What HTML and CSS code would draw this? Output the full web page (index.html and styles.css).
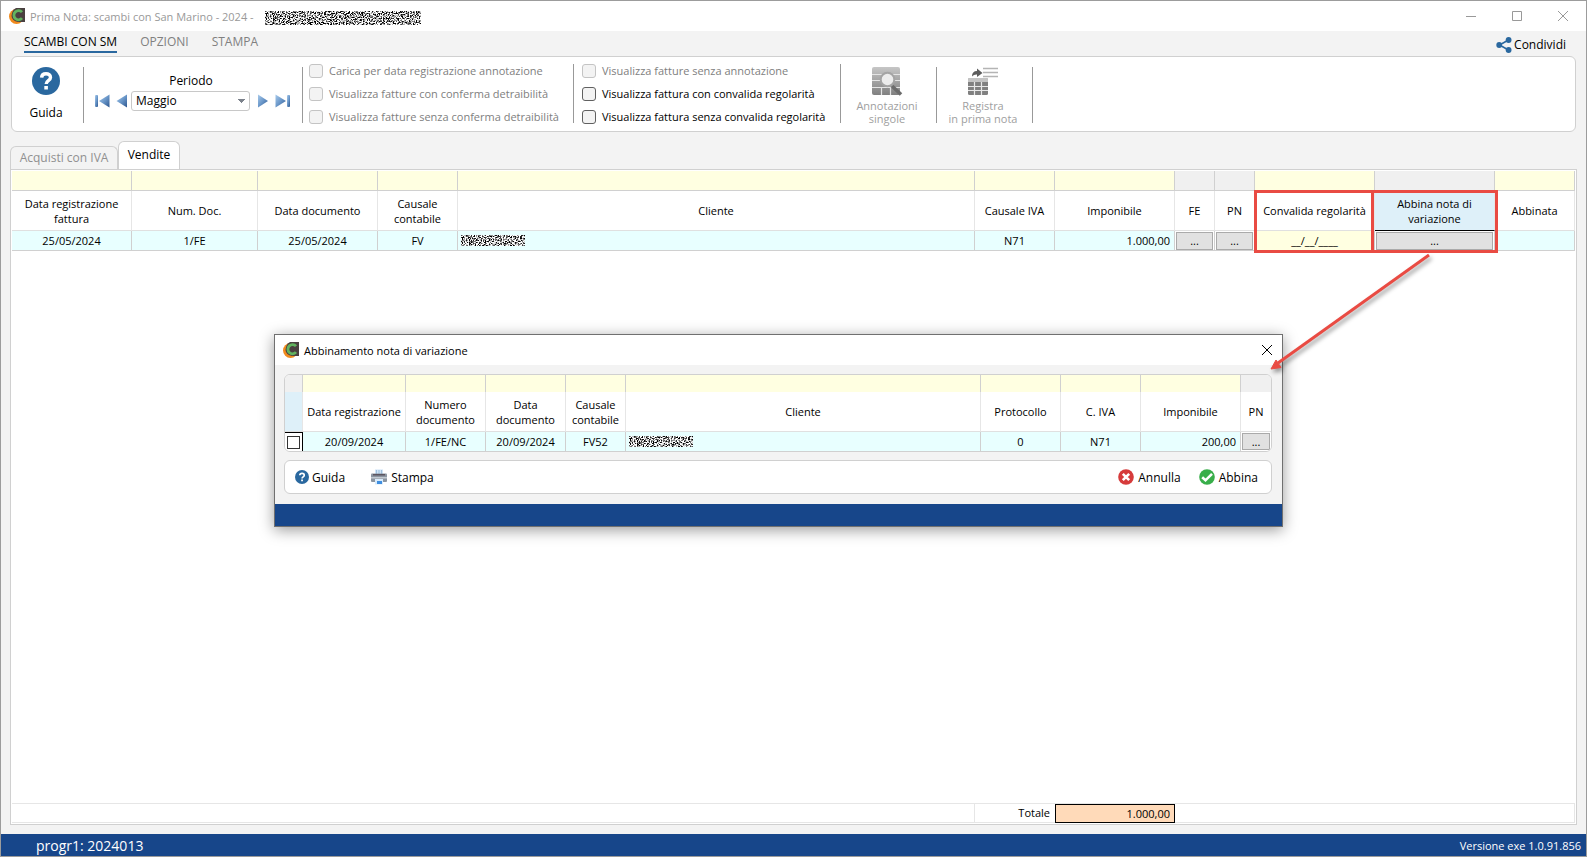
FILE: index.html
```html
<!DOCTYPE html>
<html lang="it">
<head>
<meta charset="utf-8">
<title>Prima Nota: scambi con San Marino - 2024</title>
<link rel="stylesheet" href="styles.css">
</head>
<body>
<svg class="defs" width="0" height="0" aria-hidden="true">
  <defs>
    <filter id="noise" x="0" y="0" width="100%" height="100%" color-interpolation-filters="sRGB">
      <feTurbulence type="fractalNoise" baseFrequency="0.7 0.8" numOctaves="3" seed="7"/>
      <feColorMatrix values="3.500 3.500 0 0 -2.850  3.500 3.500 0 0 -2.850  3.500 3.500 0 0 -2.850  0 0 0 0 1"/>
    </filter>
    <linearGradient id="nav" x1="0" y1="0" x2="1" y2="1">
      <stop offset="0" stop-color="#a9cbec"/><stop offset="0.5" stop-color="#6a97c9"/><stop offset="1" stop-color="#2d568f"/>
    </linearGradient>
    <linearGradient id="grey" x1="0" y1="0" x2="0" y2="1">
      <stop offset="0" stop-color="#c6c6c6"/><stop offset="1" stop-color="#808080"/>
    </linearGradient>
    <symbol id="logo" viewBox="0 0 16 16">
      <circle cx="7.500" cy="8.500" r="7.500" fill="#f08a1d"/>
      <path d="M7 0H16V14H9Q3 13 2.500 8Q3 2 7 0Z" fill="#4a4040"/>
      <path d="M13 4.200A4.600 4.600 0 1 0 13 10.200" fill="none" stroke="#62b45f" stroke-width="2.800"/>
    </symbol>
    <symbol id="help" viewBox="0 0 28 28">
      <circle cx="14" cy="14" r="14" fill="#2a689f"/>
      <path d="M9.600 10.600C9.800 7.600 11.800 6.700 14 6.700c2.500 0 4.500 1.300 4.500 3.700 0 3.300-4.300 3.200-4.300 6.500" fill="none" stroke="#fff" stroke-width="3.400"/>
      <rect x="12.300" y="19" width="3.600" height="3.500" fill="#fff"/>
    </symbol>
  </defs>
</svg>
<div class="window">
  <header class="titlebar">
    <svg class="logo"><use href="#logo"/></svg>
    <span class="title">Prima Nota: scambi con San Marino - 2024 -</span>
    <svg class="redacted redacted-title" aria-hidden="true"><rect width="100%" height="100%" filter="url(#noise)"/></svg>
    <div class="controls">
      <button type="button" aria-label="Riduci"><svg viewBox="0 0 12 12"><path d="M1 6.500H11"/></svg></button>
      <button type="button" aria-label="Ingrandisci"><svg viewBox="0 0 12 12"><path d="M1.500 1.500H10.500V10.500H1.500Z"/></svg></button>
      <button type="button" aria-label="Chiudi"><svg viewBox="0 0 12 12"><path d="M1 1L11 11M11 1L1 11"/></svg></button>
    </div>
  </header>

  <nav class="menu">
    <button type="button" class="active">SCAMBI CON SM</button>
    <button type="button">OPZIONI</button>
    <button type="button">STAMPA</button>
    <button type="button" class="share">
      <svg viewBox="0 0 16 16"><path d="M12.500 3L3.500 8L12.500 13" fill="none" stroke="#2a689f" stroke-width="1.600"/><circle cx="3.200" cy="8" r="2.900" fill="#2a689f"/><circle cx="12.600" cy="3" r="2.900" fill="#2a689f"/><circle cx="12.600" cy="13" r="2.900" fill="#2a689f"/></svg>
      Condividi
    </button>
  </nav>

  <section class="ribbon">
    <div class="group group-help">
      <button type="button" class="tool tool-help"><svg><use href="#help"/></svg>Guida</button>
    </div>
    <div class="group group-period">
      <label for="periodo">Periodo</label>
      <div class="period">
        <button type="button" class="nav" aria-label="Primo"><svg width="16" height="14" viewBox="0 0 16 14"><rect x="1" y="1" width="3" height="12" rx="1" fill="url(#nav)"/><path d="M15.500 0.500V13.500L5 7Z" fill="url(#nav)"/></svg></button>
        <button type="button" class="nav" aria-label="Precedente"><svg width="12" height="14" viewBox="0 0 12 14"><path d="M11 0.500V13.500L0.500 7Z" fill="url(#nav)"/></svg></button>
        <select id="periodo"><option>Maggio</option></select>
        <button type="button" class="nav" aria-label="Successivo"><svg width="12" height="14" viewBox="0 0 12 14"><path d="M1 0.500V13.500L11 7Z" fill="url(#nav)"/></svg></button>
        <button type="button" class="nav" aria-label="Ultimo"><svg width="16" height="14" viewBox="0 0 16 14"><rect x="12" y="1" width="3" height="12" rx="1" fill="url(#nav)"/><path d="M0.500 0.500V13.500L11 7Z" fill="url(#nav)"/></svg></button>
      </div>
    </div>
    <div class="group group-checks checks-a">
      <label class="check off"><input type="checkbox" disabled>Carica per data registrazione annotazione</label>
      <label class="check off"><input type="checkbox" disabled>Visualizza fatture con conferma detraibilità</label>
      <label class="check off"><input type="checkbox" disabled>Visualizza fatture senza conferma detraibilità</label>
    </div>
    <div class="group group-checks checks-b">
      <label class="check off"><input type="checkbox" disabled>Visualizza fatture senza annotazione</label>
      <label class="check"><input type="checkbox">Visualizza fattura con convalida regolarità</label>
      <label class="check"><input type="checkbox">Visualizza fattura senza convalida regolarità</label>
    </div>
    <div class="group group-tool">
      <button type="button" class="tool" disabled>
        <svg viewBox="0 0 32 29"><rect x="1" y="0" width="28" height="28" rx="2" fill="url(#grey)"/><path d="M1 7.500H29M1 13.500H29M1 20.500H29M10.500 20V28M19.500 20V28" stroke="#e4e4e4" stroke-width="1.200"/><path d="M21 19L30 27.500" stroke="#6c6c6c" stroke-width="3.600"/><circle cx="16.500" cy="12.500" r="6.800" fill="#ececec" stroke="#a4a4a4" stroke-width="2"/></svg>
        Annotazioni<br>singole
      </button>
    </div>
    <div class="group group-tool">
      <button type="button" class="tool" disabled>
        <svg viewBox="0 0 32 29"><rect x="1" y="11" width="20" height="17" rx="1.500" fill="#808080"/><path d="M1 15V12.500Q1 11 2.500 11H19.500Q21 11 21 12.500V15Z" fill="#c4c4c4"/><path d="M1 19.500H21M1 23.500H21M7.500 15V28M14.500 15V28" stroke="#e8e8e8" stroke-width="1.200"/><path d="M5 9.500Q5 4 10 4V1.500L15.500 6L10 10V7.500Q7 7.200 5 9.500Z" fill="#5c5c5c"/><path d="M16 1.500H31M16 5.500H31M16 9.500H31" stroke="#b4b4b4" stroke-width="1.400"/></svg>
        Registra<br>in prima nota
      </button>
    </div>
  </section>

  <div class="tabs">
    <button type="button" class="tab">Acquisti con IVA</button>
    <button type="button" class="tab current">Vendite</button>
  </div>

  <main class="panel">
    <table class="grid">
      <colgroup><col class="w120"><col class="w126"><col class="w120"><col class="w80"><col><col class="w80"><col class="w120"><col class="w40"><col class="w40"><col class="w120"><col class="w120"><col class="w80"></colgroup>
      <thead>
        <tr class="filter"><td></td><td></td><td></td><td></td><td></td><td></td><td></td><td class="locked"></td><td class="locked"></td><td></td><td class="locked"></td><td></td></tr>
        <tr class="heads"><th>Data registrazione<br>fattura</th><th>Num. Doc.</th><th>Data documento</th><th>Causale<br>contabile</th><th>Cliente</th><th>Causale IVA</th><th>Imponibile</th><th>FE</th><th>PN</th><th>Convalida regolarità</th><th class="selected underlined">Abbina nota di<br>variazione</th><th>Abbinata</th></tr>
      </thead>
      <tbody>
        <tr class="row"><td>25/05/2024</td><td>1/FE</td><td>25/05/2024</td><td>FV</td><td class="left"><svg class="redacted redacted-name" aria-hidden="true"><rect width="100%" height="100%" filter="url(#noise)"/></svg></td><td>N71</td><td class="num">1.000,00</td><td class="cmd"><button type="button">...</button></td><td class="cmd"><button type="button">...</button></td><td class="edit">__/__/____</td><td class="cmd"><button type="button">...</button></td><td></td></tr>
      </tbody>
    </table>
    <div class="totals">
      <label for="totale">Totale</label>
      <input id="totale" type="text" value="1.000,00" readonly>
    </div>
  </main>

  <footer class="status"><span class="progr">progr1: 2024013</span><span>Versione exe 1.0.91.856</span></footer>

  <section class="dialog" role="dialog" aria-labelledby="dlg-title">
    <header class="dialog-title">
      <svg class="logo"><use href="#logo"/></svg>
      <span id="dlg-title">Abbinamento nota di variazione</span>
      <button type="button" aria-label="Chiudi"><svg viewBox="0 0 12 12"><path d="M1 1L11 11M11 1L1 11"/></svg></button>
    </header>
    <div class="dialog-body">
      <div class="dialog-grid">
        <table class="grid">
          <colgroup><col class="w18"><col class="w103"><col class="w80"><col class="w80"><col class="w60"><col><col class="w80"><col class="w80"><col class="w100"><col class="w30"></colgroup>
          <thead>
            <tr class="filter"><td class="locked"></td><td></td><td></td><td></td><td></td><td></td><td></td><td></td><td></td><td class="locked"></td></tr>
            <tr class="heads"><th class="selected" aria-label="Selezione"></th><th>Data registrazione</th><th>Numero<br>documento</th><th>Data<br>documento</th><th>Causale<br>contabile</th><th>Cliente</th><th>Protocollo</th><th>C. IVA</th><th>Imponibile</th><th>PN</th></tr>
          </thead>
          <tbody>
            <tr class="row"><td class="pick"><input type="checkbox" aria-label="Seleziona riga"></td><td>20/09/2024</td><td>1/FE/NC</td><td>20/09/2024</td><td>FV52</td><td class="left"><svg class="redacted redacted-name" aria-hidden="true"><rect width="100%" height="100%" filter="url(#noise)"/></svg></td><td>0</td><td>N71</td><td class="num">200,00</td><td class="cmd"><button type="button">...</button></td></tr>
          </tbody>
        </table>
      </div>
      <div class="dialog-tools">
        <button type="button" class="cmd-help"><svg viewBox="0 0 28 28"><use href="#help"/></svg>Guida</button>
        <button type="button"><svg viewBox="0 0 16 16"><path d="M4 0.500H12V6H4Z" fill="#cfe4f7"/><path d="M5.500 1V5M8 1V5M10.500 1V5" stroke="#9fbfdc"/><rect x="0" y="4.500" width="16" height="8.500" rx="1" fill="#8b95a1"/><rect x="2" y="5" width="12" height="1.500" fill="#5c5560"/><rect x="0" y="8" width="16" height="1.500" fill="#c3cad2"/><path d="M4 10H12V15.500H4Z" fill="#d8ebfb"/><rect x="6" y="12" width="5" height="3" fill="#3f8ee0"/></svg>Stampa</button>
        <button type="button" class="push"><svg viewBox="0 0 16 16"><circle cx="8" cy="8" r="7.800" fill="#d63b3b"/><path d="M4.800 4.800L11.200 11.200M11.200 4.800L4.800 11.200" stroke="#fff" stroke-width="2.600"/></svg>Annulla</button>
        <button type="button"><svg viewBox="0 0 16 16"><circle cx="8" cy="8" r="7.800" fill="#38ae4a"/><path d="M3.200 8.300L6.500 11.300L13 4.800" fill="none" stroke="#fff" stroke-width="2.600"/></svg>Abbina</button>
      </div>
    </div>
    <div class="dialog-foot"></div>
  </section>

  <div class="mark mark-date"></div>
  <div class="mark mark-match"></div>
  <svg class="arrow" viewBox="0 0 170 126" aria-hidden="true"><path d="M163 3L12 111" stroke="#e94b43" stroke-width="3"/><path d="M5 117L10 108L15 115.500Z" fill="#e94b43" stroke="#e94b43" stroke-linejoin="round"/></svg>
</div>
</body>
</html>
```

FILE: styles.css
```css
* { box-sizing: border-box; }
body {
  margin: 0;
  font: 11px/15px "Open Sans", "Noto Sans", sans-serif;
  color: #000;
  background: #f3f3f3;
}
button, input, select { font: inherit; color: inherit; margin: 0; }
button { padding: 0; border: 0; background: none; }
.defs { position: absolute; }

.window {
  position: relative;
  display: flex;
  flex-direction: column;
  min-height: 100vh;
  border: 1px solid #9c9c9c;
}

.logo { width: 16px; height: 16px; flex: none; }
.redacted { display: block; flex: none; }
.redacted-title { width: 156px; height: 14px; margin: 4px 0 0 11px; }
.redacted-name { width: 64px; height: 11px; }

.titlebar { display: flex; align-items: center; height: 30px; padding-left: 8px; background: #fff; }
.title { margin-left: 5px; color: #999; }
.controls { display: flex; margin-left: auto; }
.controls button { width: 46px; height: 30px; display: grid; place-items: center; }
.controls svg, .dialog-title button svg { width: 12px; height: 12px; fill: none; stroke: #999; }

.menu { display: flex; align-items: flex-start; height: 25px; padding: 2px 20px 0 23px; gap: 23px; font-size: 12px; color: #808080; }
.menu button { height: 20px; line-height: 16px; padding-bottom: 2px; }
.menu .active { color: #000; border-bottom: 2px solid #2a689f; padding-bottom: 1px; }
.menu .share { display: flex; align-items: center; gap: 2px; margin: 2px 0 0 auto; padding: 0; color: #000; }
.share svg { width: 16px; height: 16px; }

.ribbon { display: flex; height: 76px; margin: 0 10px; padding: 10px 0 8px; border: 1px solid #d0d0d0; border-radius: 6px; background: #fff; }
.group { border-right: 1px solid #999; }
.group-help { width: 72px; }
.group-period { width: 219px; text-align: center; padding-top: 6px; }
.group-period label { display: block; margin-right: 4px; font-size: 12px; }
.period { display: flex; align-items: center; justify-content: center; gap: 6px; margin: 3px 1px 0 0; }
.period svg { display: block; }
.period select {
  width: 119px; height: 20px; margin: 0 1px 0 -3px; padding: 0 4px; border: 1px solid #c8c8c8; border-radius: 3px;
  appearance: none; font-size: 12px; line-height: 18px;
  background: conic-gradient(from -45deg at 50% 100%, #7c828c 90deg, transparent 0) 105px 7px / 8px 4px no-repeat, #fff;
}
.group-checks { display: flex; flex-direction: column; gap: 9px; margin: -3px 0 0; }
.checks-a { width: 271px; padding-left: 6px; }
.checks-b { width: 267px; padding-left: 8px; }
.check { display: flex; align-items: center; height: 14px; line-height: 16px; gap: 6px; white-space: nowrap; }
.check input { appearance: none; width: 14px; height: 14px; border: 1px solid #606060; border-radius: 3px; background: #f3f3f3; }
.off { color: #808080; }
.off input { border-color: #c4c4c4; }
.group-tool { width: 96px; display: flex; justify-content: center; }
.tool { width: 100%; padding-right: 3px; text-align: center; line-height: 13px; color: #a0a0a0; display: block; }
.tool svg { display: block; width: 32px; height: 29px; margin: 0 auto 3px; }
.tool-help { color: #000; font-size: 12px; line-height: 16px; }
.tool-help svg { width: 28px; height: 28px; margin-bottom: 10px; }

.tabs { display: flex; align-items: flex-end; height: 37px; padding-left: 9px; }
.tab { width: 108px; height: 23px; padding-bottom: 2px; border: 1px solid #d0d0d0; border-bottom: 0; border-radius: 6px 6px 0 0; color: #909090; font-size: 12px; }
.current { width: 62px; height: 28px; color: #000; background: #fff; }

.panel { display: flex; flex-direction: column; justify-content: space-between; flex: 1; margin: 0 9px; padding: 1px; border: 1px solid #d0d0d0; background: #fff; }
.grid { width: 100%; table-layout: fixed; border-collapse: separate; border-spacing: 0; }
.grid td, .grid th { padding: 0; border-right: 1px solid #d0d0d0; font-weight: normal; text-align: center; white-space: nowrap; }
.w18 { width: 18px; } .w30 { width: 30px; } .w40 { width: 40px; } .w60 { width: 60px; } .w80 { width: 80px; }
.w100 { width: 100px; } .w103 { width: 103px; } .w120 { width: 120px; } .w126 { width: 126px; }
.grid .filter td { height: 20px; background: #ffffe1; border-bottom: 1px solid #d0d0d0; }
.grid .filter .locked { background: #f0f0f0; }
.grid .heads th { height: 40px; border-color: #e6e6e6; border-bottom: 1px solid #e0e0e0; }
.grid .heads .selected { background: #def0f9; }
.grid .heads .underlined { border-bottom-color: #000; }
.grid .row td { height: 20px; line-height: 18px; background: #e8ffff; border-bottom: 1px solid #d0d0d0; }
.grid .row .left { padding-left: 3px; }
.grid .row .num { text-align: right; padding-right: 4px; }
.grid .row .edit { background: #ffffe1; }
.grid .row .cmd { background: #fff; }
.cmd button { display: block; width: calc(100% - 2px); height: 18px; margin: 0 auto; border: 1px solid #aaa; background: #e1e1e1; line-height: 14px; }

.totals { display: flex; align-items: center; justify-content: flex-end; height: 20px; padding-right: 399px; border: 1px solid #e6e6e6; border-left: 0; }
.totals label { width: 81px; padding-right: 5px; border-left: 1px solid #e6e6e6; text-align: right; line-height: 18px; }
.totals input { width: 120px; height: 19px; padding: 0 4px; border: 1px solid #000; border-radius: 0; background: #ffdab9; text-align: right; }

.status { display: flex; align-items: center; justify-content: space-between; height: 22px; margin-top: 9px; padding: 0 5px 0 35px; background: #17468a; color: #fff; }
.progr { font-size: 14px; }

.dialog { position: absolute; top: 333px; right: 303px; width: 1009px; border: 1px solid #707070; background: #f3f3f3; box-shadow: 0 3px 14px rgba(0, 0, 0, 0.4); }
.dialog-title { display: flex; align-items: center; height: 30px; padding-left: 8px; gap: 5px; background: #fff; }
.dialog-title button { width: 30px; height: 30px; margin-left: auto; display: grid; place-items: center; }
.dialog-title button svg { stroke: #000; }
.dialog-body { padding: 9px 10px 10px 9px; }
.dialog-grid, .dialog-tools { border: 1px solid #d0d0d0; border-radius: 6px; background: #fff; overflow: hidden; }
.dialog-grid .filter td { height: 17px; border-bottom: 0; }
.dialog-grid .heads th { height: 40px; }
.dialog-grid .row td { height: 19px; border-bottom: 0; }
.dialog-grid tr > :last-child { border-right: 0; }
.dialog-grid .cmd button { height: 17px; }
.grid .row .pick { border: 1px solid #000; border-width: 1px 1px 0 0; background: #fff; }
.pick input { appearance: none; display: block; width: 13px; height: 13px; margin: 0 auto; border: 1px solid #333; background: #fff; }
.dialog-tools { display: flex; align-items: center; height: 34px; margin-top: 8px; padding: 0 13px 0 10px; gap: 18px; font-size: 12px; }
.dialog-tools button { display: flex; align-items: center; gap: 4px; }
.dialog-tools svg { width: 16px; height: 16px; }
.dialog-tools .cmd-help { margin-right: 8px; gap: 3px; }
.dialog-tools .cmd-help svg { width: 14px; height: 14px; }
.dialog-tools .push { margin-left: auto; }
.dialog-foot { height: 22px; background: #17468a; }

/* Callout frames over the two highlighted columns */
.mark { position: absolute; top: 189px; height: 63px; border: 3px solid #e94b43; }
.mark-date { right: 212px; width: 120px; }
.mark-match { right: 88px; width: 127px; }
.arrow { position: absolute; top: 251px; right: 150px; width: 170px; height: 126px; fill: none; filter: drop-shadow(2px 3px 2px rgba(0, 0, 0, 0.4)); }
```
